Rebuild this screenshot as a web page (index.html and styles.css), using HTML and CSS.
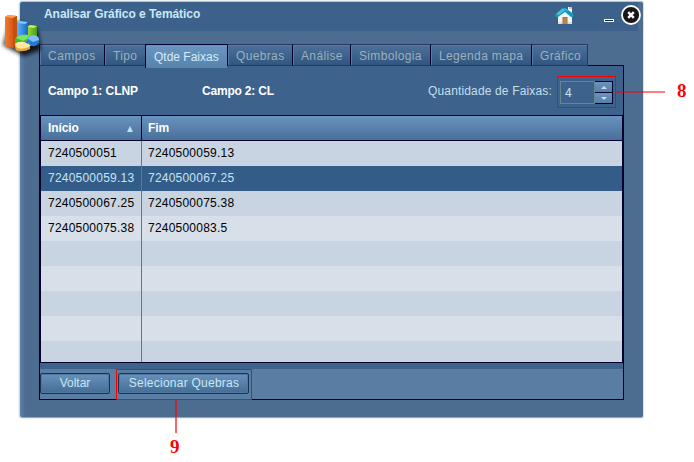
FILE: index.html
```
<!DOCTYPE html>
<html lang="pt-BR">
<head>
<meta charset="utf-8">
<title>Analisar Gráfico e Temático</title>
<link rel="stylesheet" href="styles.css">
</head>
<body>
<main class="window">
  <svg class="chart-icon" width="48" height="52" viewBox="0 0 48 52">
    <defs>
      <linearGradient id="orange"><stop offset="0" stop-color="#f07a2c"/><stop offset="1" stop-color="#c8480e"/></linearGradient>
      <linearGradient id="blue"><stop offset="0" stop-color="#58b4fa"/><stop offset="1" stop-color="#1767c5"/></linearGradient>
      <linearGradient id="green"><stop offset="0" stop-color="#97df38"/><stop offset="1" stop-color="#4a9c16"/></linearGradient>
      <filter id="shade" x="-30%" y="-30%" width="160%" height="160%"><feGaussianBlur stdDeviation="2"/></filter>
    </defs>
    <path d="M3 38L10 14l14 2 5 5 9 2 3 20-17 6-12-6z" fill="#000" opacity=".8" filter="url(#shade)"/>
    <path d="M27 20l3-2 7 1v18l-10 3z" fill="url(#green)"/><path d="M27 20l3-2 7 1-3 2z" fill="#c4ee62"/>
    <path d="M17 16l3-2 8 1v22l-11 3z" fill="url(#blue)"/><path d="M17 16l3-2 8 1-3 2z" fill="#7acbff"/>
    <path d="M5 10l3-2 9 1v29l-4 3-8-2z" fill="url(#orange)"/><path d="M5 10l3-2 9 1-4 2z" fill="#ff9c52"/><path d="M13 11l4-2v29l-4 3z" fill="#c4500f"/>
    <path d="M15 32q3-5 13-4l1 5-5 4-9 1z" fill="#42b735"/><path d="M16 31q3-4 12-3l1 3-6 3z" fill="#7be35d"/>
    <ellipse cx="33.500" cy="33.500" rx="5.700" ry="5.800" fill="#2876d7"/><path d="M28 32q1-4 6-4 5 1 5 5l-6 2z" fill="#83bcfa"/>
    <path d="M15 37q3-3 9-2l6 3v4q-5 3-12 2-3-1-3-4z" fill="#e7a238"/><path d="M15 37q3-3 9-2l6 3-1 2q-7 3-12 1z" fill="#ffe7a2"/>
  </svg>
  <header class="titlebar">
    <h1>Analisar Gráfico e Temático</h1>
    <svg class="home" width="20" height="20" viewBox="0 0 20 20">
      <path d="M13 1h4v6l-4-3z" fill="#fff"/><path d="M14 1h3v2h-3z" fill="#e9b5ae"/>
      <path d="M3 9l7-5 7 5v9H3z" fill="#f3f6f9"/><path d="M3 16h14v2H3z" fill="#d5dde6"/>
      <path d="M0 9l7-7h4l8 7-1 2h-2l-6-5-7 5H1z" fill="#159bb9"/><path d="M1 8l6-5h4l3 2-4-1-6 5z" fill="#52bfd8"/>
      <path d="M7.500 11h5v7h-5z" fill="#ad7033"/><path d="M8.500 12h3v6h-3z" fill="#c18445"/>
    </svg>
    <span class="minimize"></span>
    <svg class="close" width="20" height="20" viewBox="0 0 20 20">
      <circle cx="10" cy="10" r="9" fill="#171717" stroke="#fff" stroke-width="1.800"/>
      <path d="M7.200 7.200l5.600 5.600M12.800 7.200l-5.600 5.600" stroke="#fff" stroke-width="2.400"/>
    </svg>
  </header>
  <nav class="tabs">
    <a class="tab t-campos">Campos</a><a class="tab t-tipo">Tipo</a><a class="tab t-faixas active">Qtde Faixas</a><a class="tab t-quebras">Quebras</a><a class="tab t-analise">Análise</a><a class="tab t-simb">Simbologia</a><a class="tab t-legenda">Legenda mapa</a><a class="tab t-grafico">Gráfico</a>
  </nav>
  <section class="panel">
    <div class="fields">
      <strong class="campo-a">Campo 1: CLNP</strong>
      <strong class="campo-b">Campo 2: CL</strong>
      <span class="label">Quantidade de Faixas:</span>
      <div class="stepper">
        <span class="value">4</span>
        <span class="arrows"><i class="up"></i><i class="down"></i></span>
      </div>
    </div>
    <div class="grid">
      <div class="row head"><span class="cell first">Início<i class="sort"></i></span><span class="cell">Fim</span></div>
      <div class="row"><span class="cell first">7240500051</span><span class="cell">7240500059.13</span></div>
      <div class="row selected"><span class="cell first">7240500059.13</span><span class="cell">7240500067.25</span></div>
      <div class="row"><span class="cell first">7240500067.25</span><span class="cell">7240500075.38</span></div>
      <div class="row alt"><span class="cell first">7240500075.38</span><span class="cell">7240500083.5</span></div>
      <div class="row"><span class="cell first"></span></div>
      <div class="row alt"><span class="cell first"></span></div>
      <div class="row"><span class="cell first"></span></div>
      <div class="row alt"><span class="cell first"></span></div>
      <div class="row last"><span class="cell first"></span></div>
    </div>
    <footer class="actions">
      <button class="back">Voltar</button>
      <button class="select">Selecionar Quebras</button>
    </footer>
  </section>
</main>
<div class="mark box8"></div><div class="line8"></div><b class="num num8">8</b>
<div class="mark box9"></div><div class="line9"></div><b class="num num9">9</b>
</body>
</html>
```
FILE: styles.css
```
* { box-sizing: border-box; }
body { margin: 0; width: 694px; height: 462px; overflow: hidden; background: #fff; font-family: "Liberation Sans", Arial, sans-serif; font-size: 12px; position: relative; display: flow-root; }
.window { position: relative; margin: 1px 0 0 20px; width: 624px; height: 417px; background: #4d6d90; border-top: 1px solid #b1c3d6; border-right: 1px solid #d8e1ea; border-bottom: 1px solid #8fa6bf; border-radius: 3px; box-shadow: inset 5px 0 4px -3px #6389ac, -1px 0 2px #b9cfd0; display: flow-root; }
.chart-icon { position: absolute; left: -20px; top: 5px; }
.titlebar { height: 29px; width: 618px; padding-left: 24px; background: #3c628b; display: flex; border-radius: 3px 0 0; }
.titlebar h1 { flex: none; margin: 5px 0 0; width: 490px; font-size: 12px; line-height: 15px; color: #c9e8f8; letter-spacing: -.06px; }
.home { margin: 4px 0 0 21px; flex: none; }
.minimize { flex: none; width: 10px; height: 3px; margin: 17px 0 0 29px; background: linear-gradient(#151f28, #151f28) 1px 1px / 8px 1px no-repeat, #fff; }
.close { flex: none; margin: 3px 0 0 7px; position: relative; }
.tabs { display: flex; height: 23px; margin: 13px 0 0 19px; width: 549px; }
.tab { flex: none; height: 22px; border: 1px solid #283860; border-left-color: #00002b; border-right: 0; background: linear-gradient(#4b7099, #31567f); box-shadow: inset 1px 1px #567ba3; color: #9cb1bc; line-height: 23px; padding-left: 8px; white-space: nowrap; letter-spacing: .35px; }
.t-campos { width: 65px; letter-spacing: .5px; } .t-tipo { width: 41px; } .t-faixas { width: 82px; } .t-quebras { width: 65px; } .t-analise { width: 58px; } .t-simb { width: 80px; } .t-legenda { width: 101px; } .t-grafico { width: 57px; border-right: 1px solid #283860; }
.tab.active { height: 24px; border-color: #00002b; border-bottom: 0; background: linear-gradient(#6a95c1, #5783ad); box-shadow: none; color: #d1edfb; letter-spacing: 0; position: relative; z-index: 1; line-height: 24px; }
.panel { width: 585px; height: 335px; margin: -2px 0 0 19px; border: 1px solid #00002b; background: #3d638c; }
.fields { height: 49px; padding: 15px 0 0 8px; display: flex; color: #fff; line-height: 20px; white-space: nowrap; }
.campo-a { width: 154px; letter-spacing: -.05px; } .campo-b { width: 226px; letter-spacing: -.2px; }
.label { color: #c4dfec; width: 132px; letter-spacing: .15px; }
.stepper { display: flex; width: 53px; height: 23px; }
.value { width: 35px; border: 1px solid #6a8390; color: #c9e5f3; line-height: 22px; padding-left: 4px; }
.arrows { width: 18px; border: 1px solid #00002b; border-left: 0; display: flex; flex-direction: column; gap: 1px; background: #00002b; }
.arrows i { height: 10px; flex: 1; background: linear-gradient(#6a94bf, #557fa8); display: flex; justify-content: center; align-items: center; }
.arrows i::after { content: ""; border: 3px solid transparent; border-top-width: 0; border-bottom: 3px solid #c9dfea; }
.arrows .down::after { transform: scaleY(-1); }
.grid { width: 583px; height: 248px; border: 1px solid #00002b; }
.row { height: 25px; display: flex; background: #c8d4e2; color: #000; line-height: 24px; letter-spacing: .22px; }
.row.alt { background: #d7dfe8; }
.row.selected { background: #335c88; color: #c3e5f7; }
.row.last { height: 21px; }
.cell { padding-left: 6px; }
.cell.first { width: 101px; padding-left: 7px; border-right: 1px solid #6d747d; flex: none; position: relative; }
.row.head { background: linear-gradient(#6993bf, #476f99); color: #fff; font-weight: bold; border-bottom: 1px solid #00002b; letter-spacing: -.1px; }
.head .first { border-color: #00002b; display: flex; justify-content: space-between; }
.sort { margin: 10px 8px 0 0; height: 6px; border: 3px solid transparent; border-top: 0; border-bottom: 6px solid #c1e1f1; }
.actions { height: 30px; margin-top: 6px; background: #5a7ea3; display: flex; align-items: flex-start; }
button { height: 21px; margin: 4px 0 0; padding: 0 0 1px; font: 12px/18px "Liberation Sans", Arial, sans-serif; color: #c8e7f5; border: 1px solid #183451; border-radius: 2px; background: linear-gradient(#6891bb, #456d96); box-shadow: inset 0 0 0 1px #50789e; letter-spacing: .25px; white-space: nowrap; }
.back { width: 70px; letter-spacing: 0; } .select { width: 131px; margin-left: 8px; padding-left: 1px; }
.mark { position: absolute; border: 1px solid #f00; }
.box8 { left: 557px; top: 76px; width: 59px; height: 32px; }
.line8 { position: absolute; left: 616px; top: 91px; width: 49px; height: 2px; background: rgba(255,0,0,.5); }
.box9 { left: 116px; top: 369px; width: 136px; height: 31px; }
.line9 { position: absolute; left: 175px; top: 400px; width: 2px; height: 33px; background: rgba(255,0,0,.6); }
.num { position: absolute; color: #f00; font: bold 19px/20px "Liberation Serif", serif; }
.num8 { left: 677px; top: 81px; } .num9 { left: 170px; top: 437px; }
```
